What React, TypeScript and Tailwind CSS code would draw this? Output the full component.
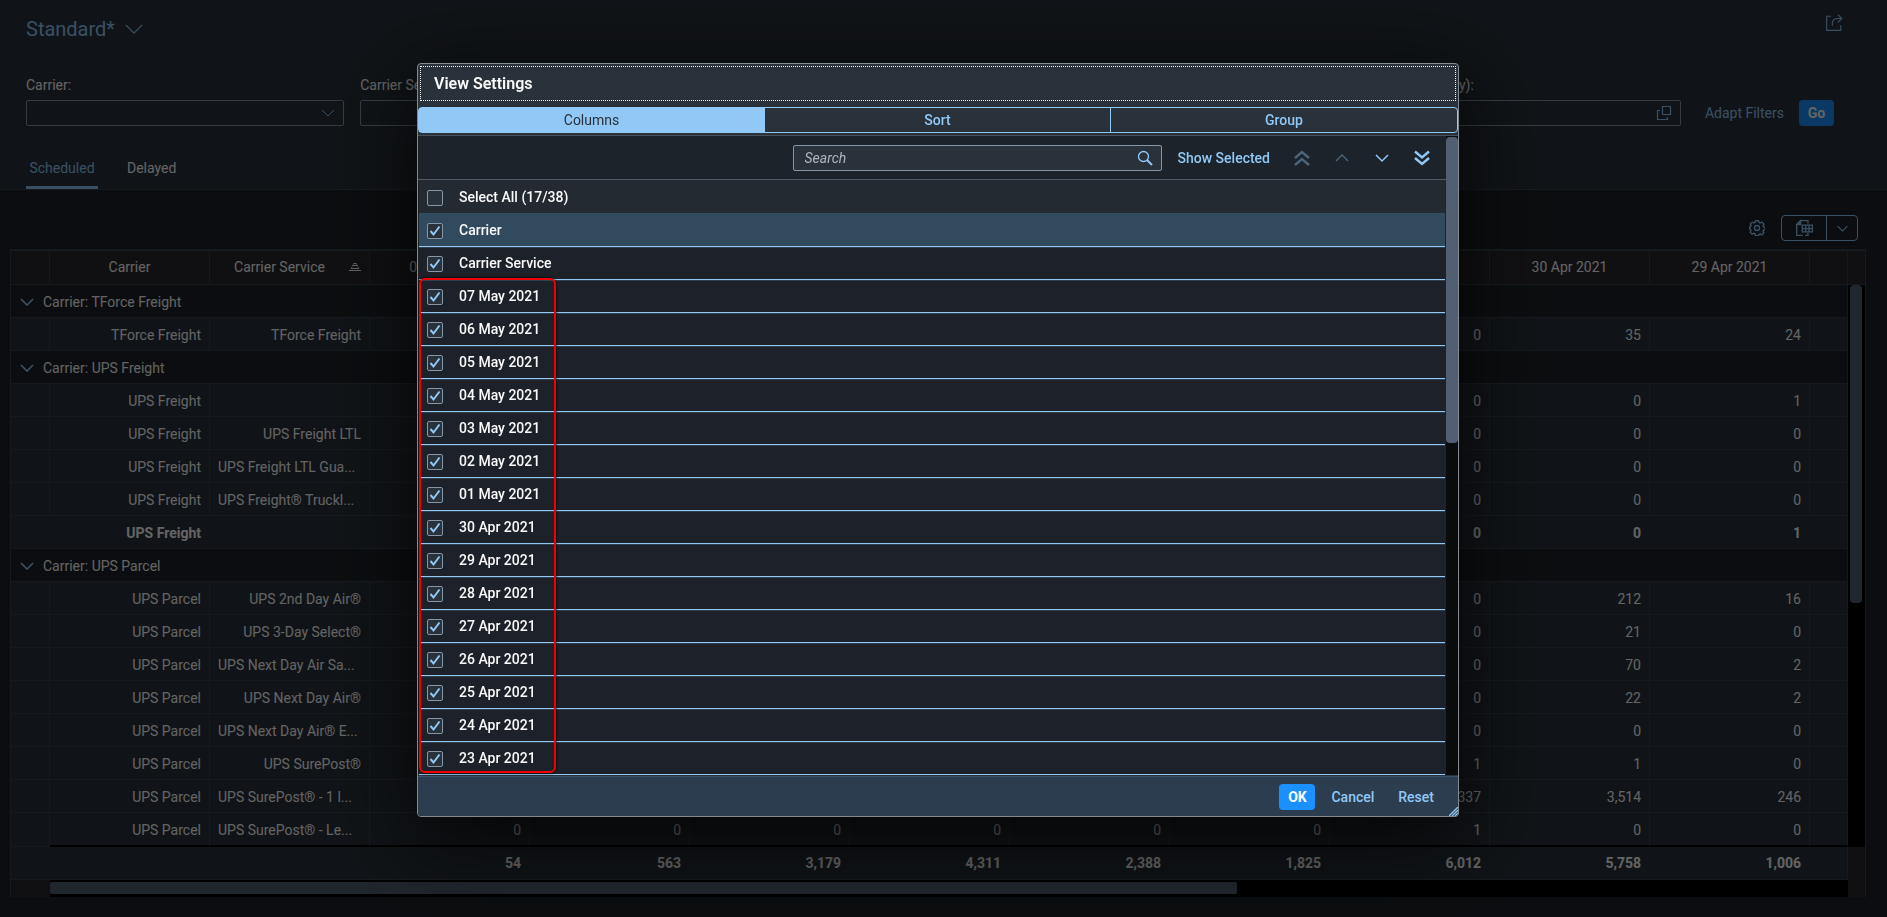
import { useState, ReactNode } from 'react';

const dates = ['07 May 2021', '06 May 2021', '05 May 2021', '04 May 2021', '03 May 2021', '02 May 2021', '01 May 2021', '30 Apr 2021', '29 Apr 2021', '28 Apr 2021', '27 Apr 2021', '26 Apr 2021', '25 Apr 2021', '24 Apr 2021', '23 Apr 2021'];
const shown = dates.slice(0, 9);
const zeros = ['0', '0', '0', '0', '0', '0'];

type Row = { kind: 'group' | 'row' | 'sum'; carrier: string; service?: string; values?: string[] };

const rows: Row[] = [
	{ kind: 'group', carrier: 'Carrier: TForce Freight' },
	{ kind: 'row', carrier: 'TForce Freight', service: 'TForce Freight', values: [...zeros, '0', '35', '24'] },
	{ kind: 'group', carrier: 'Carrier: UPS Freight' },
	{ kind: 'row', carrier: 'UPS Freight', service: '', values: [...zeros, '0', '0', '1'] },
	{ kind: 'row', carrier: 'UPS Freight', service: 'UPS Freight LTL', values: [...zeros, '0', '0', '0'] },
	{ kind: 'row', carrier: 'UPS Freight', service: 'UPS Freight LTL Gua...', values: [...zeros, '0', '0', '0'] },
	{ kind: 'row', carrier: 'UPS Freight', service: 'UPS Freight® Truckl...', values: [...zeros, '0', '0', '0'] },
	{ kind: 'sum', carrier: 'UPS Freight', service: '', values: [...zeros, '0', '0', '1'] },
	{ kind: 'group', carrier: 'Carrier: UPS Parcel' },
	{ kind: 'row', carrier: 'UPS Parcel', service: 'UPS 2nd Day Air®', values: [...zeros, '0', '212', '16'] },
	{ kind: 'row', carrier: 'UPS Parcel', service: 'UPS 3-Day Select®', values: [...zeros, '0', '21', '0'] },
	{ kind: 'row', carrier: 'UPS Parcel', service: 'UPS Next Day Air Sa...', values: [...zeros, '0', '70', '2'] },
	{ kind: 'row', carrier: 'UPS Parcel', service: 'UPS Next Day Air®', values: [...zeros, '0', '22', '2'] },
	{ kind: 'row', carrier: 'UPS Parcel', service: 'UPS Next Day Air® E...', values: [...zeros, '0', '0', '0'] },
	{ kind: 'row', carrier: 'UPS Parcel', service: 'UPS SurePost®', values: [...zeros, '1', '1', '0'] },
	{ kind: 'row', carrier: 'UPS Parcel', service: 'UPS SurePost® - 1 l...', values: [...zeros, '1,337', '3,514', '246'] },
	{ kind: 'row', carrier: 'UPS Parcel', service: 'UPS SurePost® - Le...', values: [...zeros, '1', '0', '0'] },
];

const totals = ['54', '563', '3,179', '4,311', '2,388', '1,825', '6,012', '5,758', '1,006'];

function Icon({ className, size = 16, width = 1, children }: { className?: string; size?: number; width?: number; children: ReactNode }) {
	return (
		<svg className={className} width={size} height={size} viewBox="0 0 16 16" fill="none" stroke="currentColor" strokeWidth={width} aria-hidden="true">
			{children}
		</svg>
	);
}

function Chevron({ className, size, width }: { className?: string; size?: number; width?: number }) {
	return <Icon className={className} size={size} width={width}><path d="M2 5l6 6 6-6" /></Icon>;
}

function ValueHelp() {
	return (
		<Icon width={1.2}>
			<path d="M6.500 1.500h8v8h-8z" />
			<path d="M4 5.500H1.500v9h10V12" />
		</Icon>
	);
}

function Filters() {
	const others = [
		{ id: 'service', label: 'Carrier Service:' },
		{ id: 'plant', label: 'Plant:' },
		{ id: 'date', label: 'Date:' },
		{ id: 'city', label: 'Destination (City):' },
	];
	return (
		<div className="mt-5 flex items-end pl-[26px] pr-[53px]">
			<form className="grid flex-1 grid-cols-5 gap-4" onSubmit={e => e.preventDefault()}>
				<div className="flex flex-col gap-[5px]">
					<label htmlFor="carrier" className="leading-5">Carrier:</label>
					<div className="grid items-center">
						<select id="carrier" className="col-start-1 row-start-1 h-[26px] appearance-none rounded-xs border border-[#8696a9] bg-[#29313a] px-2">
							<option></option>
							<option>UPS Freight</option>
							<option>UPS Parcel</option>
						</select>
						<Chevron className="pointer-events-none col-start-1 row-start-1 mr-2 justify-self-end text-[#91c8f6]" />
					</div>
				</div>
				{others.map(o => (
					<div key={o.id} className="flex flex-col gap-[5px]">
						<label htmlFor={o.id} className="leading-5">{o.label}</label>
						<div className="flex h-[26px] items-center rounded-xs border border-[#8696a9] bg-[#29313a] pr-2">
							<input id={o.id} className="min-w-0 flex-1 px-2" />
							<button type="button" aria-label="Value help" className="text-[#91c8f6]"><ValueHelp /></button>
						</div>
					</div>
				))}
			</form>
			<button className="ml-4 h-[26px] pl-2 text-[#91c8f6]">Adapt Filters</button>
			<button className="ml-[15px] h-[26px] w-[35px] rounded-sm bg-[#1b90ff] text-center font-bold">Go</button>
		</div>
	);
}

function Cell({ children, className = '' }: { children?: ReactNode; className?: string }) {
	return <td className={'truncate border-b border-r border-[#38424d] px-2 pt-0.5 ' + className}>{children}</td>;
}

function CarrierTable() {
	return (
		<div className="ml-2.5 mr-[21px] flex border-l border-r border-[#38424d]">
			<div className="min-w-0 flex-1">
				<table className="w-full table-fixed border-separate border-spacing-0 text-right">
					<colgroup>
						<col className="w-[39px]" />
						<col className="w-40" />
						<col className="w-40" />
						{shown.map(d => <col key={d} className="w-40" />)}
						<col />
					</colgroup>
					<thead>
						<tr className="h-9 bg-[#29292f] text-center">
							<th className="border-b border-r border-t-2 border-[#38424d]"></th>
							<th className="border-b border-r border-t-2 border-[#38424d] pb-0.5 font-normal">Carrier</th>
							<th className="border-b border-r border-t-2 border-[#38424d] px-2 pb-0.5 font-normal">
								<div className="flex items-center gap-2">
									<span className="flex-1">Carrier Service</span>
									<svg width="12" height="8" viewBox="0 0 12 8" stroke="currentColor" aria-label="Sorted ascending">
										<path d="M0 7.500h12M2 5.500h8M3.500 2.500h5M4.500 .5h3" />
										<path d="M2 5.500l3-5M10 5.500l-3-5" strokeWidth=".6" />
									</svg>
								</div>
							</th>
							{shown.map(d => <th key={d} className="border-b border-r border-t-2 border-[#38424d] pb-0.5 font-normal">{d}</th>)}
							<th className="border-b border-r border-t-2 border-[#38424d]"></th>
						</tr>
					</thead>
					<tbody>
						{rows.map((r, i) => {
							if (r.kind === 'group') {
								return (
									<tr key={i} className="h-[33px] bg-[#1c2228]">
										<td colSpan={13} className="border-b border-r border-[#38424d] pt-0.5">
											<div className="flex items-center gap-2 pl-2">
												<Chevron className="text-[#91c8f6]" width={1.7} />
												{r.carrier}
											</div>
										</td>
									</tr>
								);
							}
							const last = i === rows.length - 1;
							const extra = r.kind === 'sum' ? 'border-r-transparent font-bold' : last ? 'border-b-2 border-b-black' : '';
							return (
								<tr key={i} className={last ? 'h-[34px] bg-[#29313a]' : 'h-[33px] bg-[#29313a]'}>
									<Cell className={r.kind === 'sum' ? 'border-r-transparent' : ''} />
									<Cell className={extra}>{r.carrier}</Cell>
									<Cell className={extra + (r.service?.endsWith('...') ? ' text-left' : '')}>{r.service}</Cell>
									{r.values?.map((v, k) => <Cell key={k} className={extra}>{v}</Cell>)}
									<Cell className={last ? 'border-b-2 border-b-black' : ''} />
								</tr>
							);
						})}
					</tbody>
					<tfoot>
						<tr className="h-[33px] bg-[#29313a] font-bold">
							<td colSpan={3} className="border-b border-[#38424d]"></td>
							{totals.map(t => <td key={t} className="border-b border-[#38424d] pr-[9px]">{t}</td>)}
							<td className="border-b border-r border-[#38424d]"></td>
						</tr>
					</tfoot>
				</table>
				<div className="flex h-[17px]">
					<div className="w-[39px] bg-[#29292f]"></div>
					<div className="flex-1 bg-black py-0.5">
						<div className="h-3 w-[66%] rounded-xs bg-[#525f73]"></div>
					</div>
				</div>
			</div>
			<div className="flex w-[17px] flex-col">
				<div className="h-9 border-b border-t-2 border-[#38424d] bg-[#29292f]"></div>
				<div className="flex-1 bg-black pl-0.5 pr-[3px]">
					<div className="h-[318px] rounded-sm bg-[#525f73]"></div>
				</div>
				<div className="h-[50px] bg-[#29292f]"></div>
			</div>
		</div>
	);
}

function Page() {
	return (
		<div className="min-h-screen bg-[#1c2228] pb-5">
			<header className="border-b border-[#38424d] bg-[#29313a]">
				<div className="flex items-start justify-between pl-[26px] pr-11 pt-3.5">
					<button className="flex h-[41px] items-start gap-2 text-xl leading-[30px] text-[#91c8f6]">
						Standard*
						<Chevron className="mt-1" size={22} width={1} />
					</button>
					<button aria-label="Share" className="text-[#91c8f6]">
						<Icon size={18}>
							<path d="M5.500 2H1.500v12.500h12.500V10" />
							<path d="M6.500 10.500V8.500q0-4.500 5-4.500H15M11.500 .5L15 4l-3.500 3.500" />
						</Icon>
					</button>
				</div>
				<Filters />
				<nav className="mt-6 flex gap-[26px] pl-[26px]">
					<button className="h-[39px] w-[72px] border-b-3 border-[#91c8f6] text-[#91c8f6]">Scheduled</button>
					<button className="h-[39px] border-b-3 border-transparent px-[3px]">Delayed</button>
				</nav>
			</header>
			<main>
				<div className="flex h-[59px] items-end justify-end gap-4 pb-2 pr-[29px]">
					<button aria-label="Settings" className="h-[26px] text-[#91c8f6]">
						<Icon width={1.4}>
							<circle cx="8" cy="8" r="2.500" />
							<path d="M6.500 .7h3l.5 1.800 1.200.5 1.700-.9 2 2-.9 1.700.5 1.200 1.800.5v2l-1.800.5-.5 1.200.9 1.700-2 2-1.700-.9-1.200.5-.5 1.200h-3L6 13.800l-1.200-.5-1.700.9-2-2 .9-1.700-.5-1.200L.7 9V7l1-.5.5-1.200-1-1.200 2-2 1.600.9L6 2.500z" />
						</Icon>
					</button>
					<div className="flex h-[26px] rounded-sm border border-[#91c8f6] text-[#91c8f6]">
						<button aria-label="Export" className="grid w-[45px] place-items-center border-r border-[#91c8f6]">
							<Icon size={18} width={1.2}>
								<path d="M7 14.500H1.500V5L5 1.500h6.500V4M11.500 12.500v2H9" />
								<path d="M1.500 5L5 1.500V5z" fill="currentColor" />
								<path d="M6.500 5.500h9v6h-9zM6.500 8.500h9M9.500 5.500v6M12.500 5.500v6" />
							</Icon>
						</button>
						<button aria-label="Export options" className="grid w-[30px] place-items-center"><Chevron size={13} width={1.3} /></button>
					</div>
				</div>
				<CarrierTable />
			</main>
		</div>
	);
}

function Check({ label, checked, onChange, className }: { label: string; checked: boolean; onChange: () => void; className: string }) {
	return (
		<label className={'flex h-[33px] items-center pl-2 pt-0.5 ' + className}>
			<span className="grid">
				<input type="checkbox" checked={checked} onChange={onChange} className="peer col-start-1 row-start-1 size-4 appearance-none rounded-xs border border-[#8696a9] bg-[#29313a]" />
				<svg className="pointer-events-none invisible col-start-1 row-start-1 size-4 text-[#91c8f6] peer-checked:visible" viewBox="0 0 16 16" fill="none" stroke="currentColor" strokeWidth="2">
					<path d="M3.500 8l3 3.500L12.500 3.500" />
				</svg>
			</span>
			<span className="ml-4 pb-0.5">{label}</span>
		</label>
	);
}

function ViewSettings() {
	const columns = ['Carrier', 'Carrier Service', ...dates];
	const [selected, setSelected] = useState<string[]>(columns);
	const [search, setSearch] = useState('');

	const toggle = (name: string) => {
		setSelected(selected.includes(name) ? selected.filter(s => s !== name) : [...selected, name]);
	};

	const item = (name: string) => (
		<li key={name}>
			<Check
				label={name}
				checked={selected.includes(name)}
				onChange={() => toggle(name)}
				className={name === 'Carrier' ? 'border-b border-[#91c8f6] bg-[#324a5e]' : 'border-b border-[#91c8f6] bg-[#1d2129] shadow-[inset_0_1px_0_#30404f]'}
			/>
		</li>
	);

	return (
		<div role="dialog" aria-label="View Settings" className="w-[1042px] overflow-hidden rounded-sm border border-[#858a90] bg-[#29313a] font-medium text-[#fafafa] shadow-[0_20px_80px_rgba(0,0,0,0.8)]">
			<h1 className="mx-0.5 mt-0.5 flex h-[35px] items-center border border-dotted border-white pl-[13px] text-base font-semibold">View Settings</h1>
			<div className="mb-0.5 mt-1.5 grid h-[26px] grid-cols-3 divide-x divide-[#91c8f6] rounded-sm border border-[#91c8f6] text-[#91c8f6]">
				<button className="bg-[#91c8f6] font-normal text-[#29313a]">Columns</button>
				<button>Sort</button>
				<button>Group</button>
			</div>
			<div className="flex border-t border-[#48505a] bg-[#1d232a]">
				<div className="flex-1">
					<div className="flex h-11 items-center justify-end gap-2 border-b border-[#535a64] pr-2">
						<div className="flex h-[26px] w-[369px] items-center rounded-xs border border-[#8696a9] bg-[#29313a] px-2">
							<input type="search" aria-label="Search" placeholder="Search" value={search} onChange={e => setSearch(e.target.value)} className="min-w-0 flex-1 px-[3px] font-normal placeholder:italic placeholder:text-[#b2b6ba]" />
							<button aria-label="Find" className="text-[#91c8f6]">
								<Icon>
									<circle cx="6.500" cy="6.500" r="5" strokeWidth="1.300" />
									<path d="M10 10l5 5" strokeWidth="2" />
								</Icon>
							</button>
						</div>
						<button className="h-[26px] px-2 text-[#91c8f6]">Show Selected</button>
						<button aria-label="Move to top" disabled className="grid h-[26px] w-8 place-items-center text-[#91c8f6] opacity-40">
							<Icon width={2.4}><path d="M1 8l7-6 7 6M1 15l7-6 7 6" /></Icon>
						</button>
						<button aria-label="Move up" disabled className="grid h-[26px] w-8 place-items-center text-[#91c8f6] opacity-40">
							<Icon width={1.3}><path d="M2 11l6-6 6 6" /></Icon>
						</button>
						<button aria-label="Move down" className="grid h-[26px] w-8 place-items-center text-[#91c8f6]"><Chevron width={1.5} /></button>
						<button aria-label="Move to bottom" className="grid h-[26px] w-8 place-items-center text-[#91c8f6]">
							<Icon width={2.4}><path d="M1 1.500l7 6 7-6M1 8l7 6 7-6" /></Icon>
						</button>
					</div>
					<div className="px-px">
						<Check label="Select All (17/38)" checked={false} onChange={() => setSelected(columns)} className="bg-[#232a31]" />
						<ul className="border-t border-[#324a5e]">{columns.slice(0, 2).map(item)}</ul>
						<div className="relative">
							<ul>{columns.slice(2).map(item)}</ul>
							<div className="pointer-events-none absolute -top-0.5 bottom-0.5 left-0 w-[137px] rounded-md border-2 border-[#f00000] shadow-[0_0_3px_#000000]"></div>
						</div>
					</div>
				</div>
				<div className="w-3 bg-[#0a0b0d] pt-px">
					<div className="h-[306px] rounded-sm bg-[#525f73]"></div>
				</div>
			</div>
			<footer className="relative mt-px flex h-10 items-center justify-end gap-2 border-t border-[#3a536b] bg-[#2c3d4f] pr-4 text-[#91c8f6]">
				<button className="h-[26px] w-9 rounded-sm bg-[#1b90ff] text-center font-bold text-white">OK</button>
				<button className="h-[26px] px-2">Cancel</button>
				<button className="h-[26px] px-2">Reset</button>
				<svg className="absolute bottom-0 right-0" width="9" height="9" viewBox="0 0 9 9" stroke="currentColor" strokeWidth="1.300" aria-hidden="true">
					<path d="M0 9L9 0M3 9l6-6M6 9l3-3" />
				</svg>
			</footer>
		</div>
	);
}

export default function App() {
	return (
		<div className="font-['Roboto',sans-serif] text-sm text-[#fafafa]">
			<Page />
			<div className="fixed inset-0 flex items-start justify-center overflow-hidden bg-black/60 pr-[11px] pt-[63px]">
				<ViewSettings />
			</div>
		</div>
	);
}
